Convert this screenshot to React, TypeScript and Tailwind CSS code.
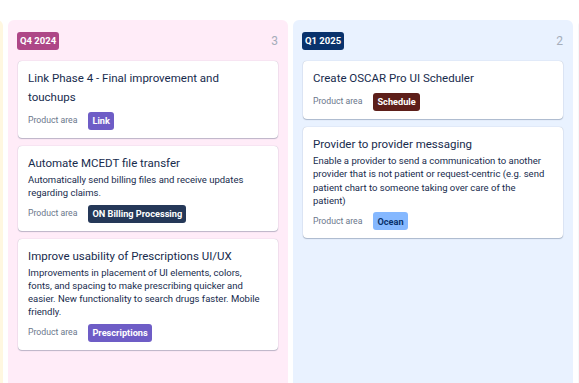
type Card = {
  title: string;
  desc?: string;
  tag: string;
  tagClass: string;
};

type Column = {
  label?: string;
  labelClass?: string;
  count?: number;
  bg: string;
  cards: Card[];
};

// descriptions keep the line breaks of the board
const columns: Column[] = [
  { bg: "bg-[#fff7e0]", cards: [] },
  {
    label: "Q4 2024",
    labelClass: "bg-[#ae4787] text-white",
    count: 3,
    bg: "bg-[#ffecf8]",
    cards: [
      {
        title: "Link Phase 4 - Final improvement and touchups",
        tag: "Link",
        tagClass: "bg-[#6e5dc6] text-white",
      },
      {
        title: "Automate MCEDT file transfer",
        desc: "Automatically send billing files and receive updates\nregarding claims.",
        tag: "ON Billing Processing",
        tagClass: "bg-[#253858] text-white",
      },
      {
        title: "Improve usability of Prescriptions UI/UX",
        desc: "Improvements in placement of UI elements, colors,\nfonts, and spacing to make prescribing quicker and\neasier. New functionality to search drugs faster. Mobile\nfriendly.",
        tag: "Prescriptions",
        tagClass: "bg-[#6e5dc6] text-white",
      },
    ],
  },
  {
    label: "Q1 2025",
    labelClass: "bg-[#09326c] text-white",
    count: 2,
    bg: "bg-[#e9f2ff]",
    cards: [
      {
        title: "Create OSCAR Pro UI Scheduler",
        tag: "Schedule",
        tagClass: "bg-[#5d1f1a] text-white",
      },
      {
        title: "Provider to provider messaging",
        desc: "Enable a provider to send a communication to another\nprovider that is not patient or request-centric (e.g. send\npatient chart to someone taking over care of the\npatient)",
        tag: "Ocean",
        tagClass: "bg-[#85b8ff] text-[#09326c]",
      },
    ],
  },
  { bg: "bg-[#f7f8f9]", cards: [] },
];

export default function App() {
  return (
    <div
      className="h-[383px] w-[579px] overflow-hidden bg-white pt-5"
      style={{ fontFamily: 'Roboto, "Noto Sans", sans-serif' }}
    >
      <div className="flex gap-[5px] -ml-[277px]">
        {columns.map((col, i) => (
          <div
            key={i}
            className={`${col.bg} w-[280px] h-[400px] shrink-0 rounded-md`}
          >
            <div className="flex items-center justify-between h-[41px] pl-[9px] pr-[10px]">
              {col.label && (
                <>
                  <span
                    className={`${col.labelClass} rounded-[3px] px-[3px] h-[18px] flex items-center text-[9.5px] font-bold leading-none`}
                  >
                    {col.label}
                  </span>
                  <span className="text-[12px] text-[#a5adba]">
                    {col.count}
                  </span>
                </>
              )}
            </div>
            <div className="flex flex-col gap-2 px-[10px]">
              {col.cards.map((c) => (
                <div
                  key={c.title}
                  className="bg-white rounded-[4px] shadow-[0_1px_1px_rgba(9,30,66,0.25),0_0_1px_rgba(9,30,66,0.31)] px-[10px] pt-[8px] pb-[8px]"
                >
                  <div className="text-[11.5px] leading-[19px] text-[#172b4d]">
                    {c.title}
                  </div>
                  {c.desc && (
                    <div className="text-[9.5px] leading-[13.3px] text-[#172b4d] whitespace-pre-line">
                      {c.desc}
                    </div>
                  )}
                  <div className="flex items-center gap-[11px] mt-[5px]">
                    <span className="text-[8.7px] text-[#6b778c]">
                      Product area
                    </span>
                    <span
                      className={`${c.tagClass} rounded-[3px] px-[4px] h-[18px] flex items-center text-[9.2px] font-bold leading-none`}
                    >
                      {c.tag}
                    </span>
                  </div>
                </div>
              ))}
            </div>
          </div>
        ))}
      </div>
    </div>
  );
}
